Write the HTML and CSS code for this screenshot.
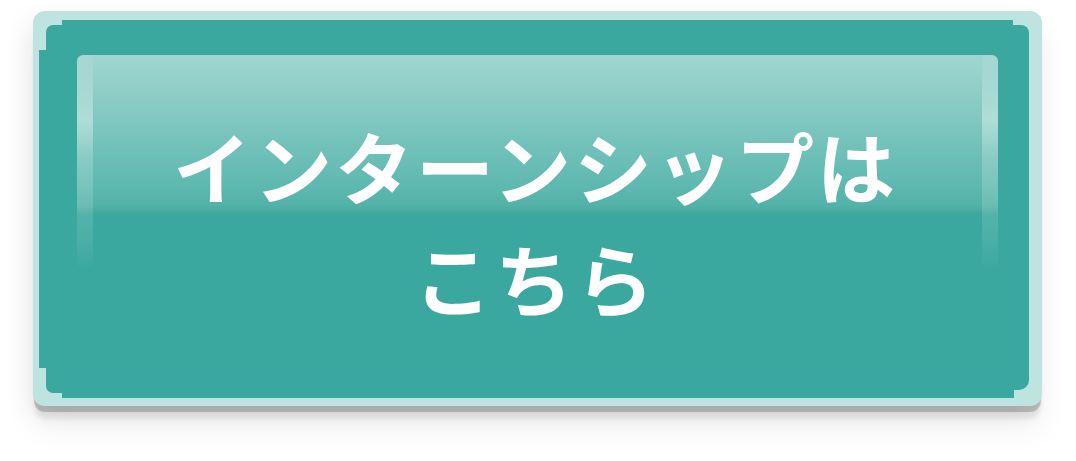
FILE: index.html
```html
<!DOCTYPE html>
<html lang="ja">
<head>
<meta charset="utf-8">
<title>インターンシップはこちら</title>
<link rel="stylesheet" href="styles.css">
</head>
<body>
  <a class="btn" href="#">
    <span class="face">
      <span class="gloss">
        <span class="strip strip-l"></span>
        <span class="strip strip-r"></span>
      </span>
      <span class="corner tl"></span>
      <span class="corner tr"></span>
      <span class="corner bl"></span>
      <span class="corner br"></span>
      <span class="label">インターンシップは<br>こちら</span>
    </span>
  </a>
</body>
</html>
```

FILE: styles.css
```css
html, body {
  margin: 0;
  padding: 0;
  background: #ffffff;
}

body {
  width: 1076px;
  height: 461px;
  overflow: hidden;
}

.btn {
  display: block;
  box-sizing: border-box;
  width: 1009px;
  height: 395px;
  margin: 11px 0 0 33px;
  padding: 9px 13px 8px 6px;
  background: #bee4e0;
  border-radius: 12px;
  text-decoration: none;
  box-shadow:
    0 7px 1px -1px rgba(0, 0, 0, 0.2),
    0 15px 5px -2px rgba(0, 0, 0, 0.08),
    0 24px 30px rgba(0, 0, 0, 0.06),
    -8px 6px 26px rgba(0, 0, 0, 0.05);
}

.face {
  position: relative;
  display: flex;
  align-items: center;
  justify-content: center;
  box-sizing: border-box;
  height: 100%;
  padding-top: 24px;
  background: #3aa89e;
}

.gloss {
  position: absolute;
  left: 38px;
  right: 31px;
  top: 35px;
  height: 215px;
  border-radius: 6px 6px 0 0;
  background: linear-gradient(to bottom,
    #9fd5d0 0%,
    #98d2cc 8%,
    #86cac3 25%,
    #6fc0b8 45%,
    #5db8af 62%,
    #52b2a8 70%,
    #48ada3 72%,
    #3aa89e 74%,
    #3aa89e 100%);
}

.strip {
  position: absolute;
  top: 0;
  width: 16px;
  height: 215px;
  background: linear-gradient(to bottom,
    rgba(255, 255, 255, 0.06) 0%,
    rgba(255, 255, 255, 0.2) 15%,
    rgba(255, 255, 255, 0.38) 30%,
    rgba(255, 255, 255, 0.2) 48%,
    rgba(255, 255, 255, 0.14) 70%,
    rgba(255, 255, 255, 0.08) 88%,
    rgba(255, 255, 255, 0) 100%);
}

.strip-l { left: 0; border-top-left-radius: 6px; }
.strip-r { right: 0; border-top-right-radius: 6px; }

.corner {
  position: absolute;
  background: #bee4e0;
}

.corner::after {
  content: "";
  position: absolute;
  background: #3aa89e;
}

.tl { left: 0; top: 0; width: 23px; height: 30px; }
.tl::after { left: 7px; top: 5px; width: 16px; height: 25px; border-top-left-radius: 7px; }

.tr { right: 0; top: 0; width: 16px; height: 13px; }
.tr::after { left: 0; top: 5px; width: 16px; height: 8px; border-top-right-radius: 8px; }

.bl { left: 0; bottom: 0; width: 23px; height: 30px; }
.bl::after { left: 7px; top: 0; width: 16px; height: 25px; border-bottom-left-radius: 7px; }

.br { right: 0; bottom: 0; width: 15px; height: 18px; }
.br::after { left: 0; top: 0; width: 15px; height: 10px; border-bottom-right-radius: 10px; }

.label {
  position: relative;
  z-index: 1;
  color: #ffffff;
  font-family: "Noto Sans CJK JP", "Noto Sans", sans-serif;
  font-weight: 700;
  font-size: 78px;
  line-height: 112px;
  letter-spacing: 3px;
  padding-left: 3px;
  text-align: center;
}
```
